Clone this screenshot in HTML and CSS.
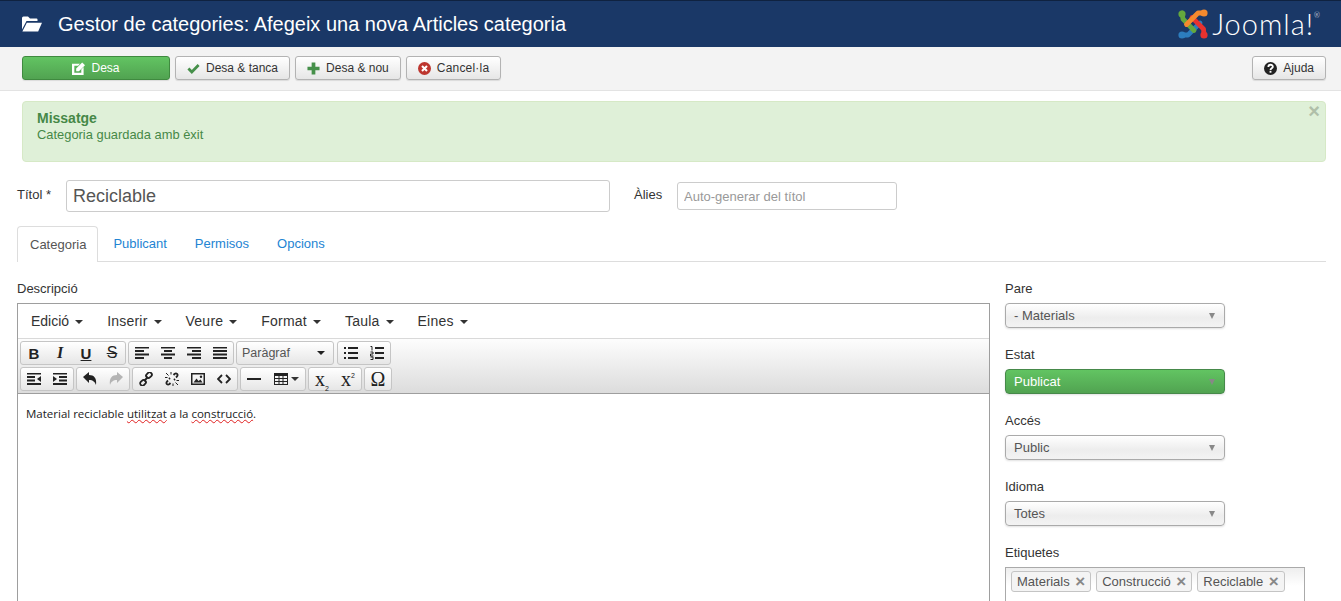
FILE: index.html
```html
<!DOCTYPE html>
<html lang="ca">
<head>
  <meta charset="UTF-8">
  <title>Gestor de categories</title>
  <link rel="stylesheet" href="styles.css">
</head>
<body>

  <header class="topbar">
    <svg class="topbar-icon" viewBox="0 0 20 16"><path fill="#fff" d="M0 2a1.500 1.500 0 0 1 1.500-1.500h4.500l2 2h6.500a1 1 0 0 1 1 1v1.500h-11l-4.500 8.500z"/><path fill="#fff" d="M4.800 6.800h15.200l-3.800 8.700h-15.800z"/></svg>
    <h1>Gestor de categories: Afegeix una nova Articles categoria</h1>
    <div class="logo">
      <svg class="logo-mark" viewBox="0 0 30 30" fill="none" stroke-width="4.800" stroke-linecap="round" stroke-linejoin="round">
        <path stroke="#2c7dbe" d="M4 26 L10 26 L22 14"/>
        <path stroke="#64a83d" d="M4 4 L5 10 L16 21.500"/>
        <path stroke="#e8322f" d="M26 26 L25.500 20 L14 8.500"/>
        <path stroke="#f48a2e" d="M26 4 L20 4 L8.500 15.500"/>
        <circle cx="4" cy="5" r="3.600" fill="#64a83d"/>
        <circle cx="26" cy="4" r="3.600" fill="#f48a2e"/>
        <circle cx="26" cy="26" r="3.600" fill="#e8322f"/>
        <circle cx="4" cy="26" r="3.600" fill="#2c7dbe"/>
      </svg>
      <span class="logo-text">Joomla!<sup>®</sup></span>
    </div>
  </header>

  <div class="toolbar">
    <button class="btn btn-save">
      <svg class="ico" viewBox="0 0 14 14"><path fill="#fff" d="M0 2h8.500l-2 2h-4v7.500h7.500v-3.500l2.500-2.500v8.500h-12.500z"/><path fill="#fff" d="M4.500 7l6.500-6.500 3 3-6.500 6.500h-3z"/></svg>
      Desa
    </button>
    <button class="btn">
      <svg class="ico" viewBox="0 0 14 14"><path fill="none" stroke="#46904a" stroke-width="3" d="M1.500 7l3.700 3.700 7.300-7.500"/></svg>
      Desa &amp; tanca
    </button>
    <button class="btn">
      <svg class="ico" viewBox="0 0 14 14"><path fill="none" stroke="#46904a" stroke-width="4" d="M7 .5v13M.5 7h13"/></svg>
      Desa &amp; nou
    </button>
    <button class="btn btn-cancel">
      <svg class="ico" viewBox="0 0 14 14"><circle cx="7" cy="7" r="7" fill="#bd362f"/><path stroke="#fff" stroke-width="2.200" d="M4.300 4.300l5.400 5.400M9.700 4.300l-5.400 5.400"/></svg>
      Cancel·la
    </button>
    <button class="btn btn-help">
      <svg class="ico" viewBox="0 0 14 14"><circle cx="7" cy="7" r="7" fill="#222"/><path fill="none" stroke="#fff" stroke-width="2" d="M4.700 5.300c0-3 4.800-3 4.800-.3 0 1.800-2.500 1.500-2.500 3.500"/><rect x="6" y="9.500" width="2" height="2" fill="#fff"/></svg>
      Ajuda
    </button>
  </div>

  <div class="alert">
    <span class="alert-close">×</span>
    <h4>Missatge</h4>
    <p>Categoria guardada amb èxit</p>
  </div>

  <div class="title-row">
    <label class="title-label">Títol *</label>
    <input class="title-input" type="text" value="Reciclable">
    <label class="alias-label">Àlies</label>
    <input class="alias-input" type="text" placeholder="Auto-generar del títol">
  </div>

  <ul class="tabs">
    <li class="active">Categoria</li>
    <li>Publicant</li>
    <li>Permisos</li>
    <li>Opcions</li>
  </ul>

  <div class="columns">
    <div class="main-col">
      <label class="field-label">Descripció</label>
      <div class="editor">
        <div class="menubar">
          <span class="menu-item">Edició<i class="caret"></i></span>
          <span class="menu-item">Inserir<i class="caret"></i></span>
          <span class="menu-item">Veure<i class="caret"></i></span>
          <span class="menu-item">Format<i class="caret"></i></span>
          <span class="menu-item">Taula<i class="caret"></i></span>
          <span class="menu-item">Eines<i class="caret"></i></span>
        </div>
        <div class="edit-tools">
          <div class="tool-row">
            <div class="group">
              <span class="tool tool-b">B</span>
              <span class="tool tool-i">I</span>
              <span class="tool tool-u">U</span>
              <span class="tool tool-s">S</span>
            </div>
            <div class="group">
              <span class="tool"><svg viewBox="0 0 14 12"><path d="M0 .5h14M0 4h9M0 7.500h14M0 11h9" stroke="#222" stroke-width="1.800"/></svg></span>
              <span class="tool"><svg viewBox="0 0 14 12"><path d="M0 .5h14M3 4h8M0 7.500h14M3 11h8" stroke="#222" stroke-width="1.800"/></svg></span>
              <span class="tool"><svg viewBox="0 0 14 12"><path d="M0 .5h14M5 4h9M0 7.500h14M5 11h9" stroke="#222" stroke-width="1.800"/></svg></span>
              <span class="tool"><svg viewBox="0 0 14 12"><path d="M0 .5h14M0 4h14M0 7.500h14M0 11h14" stroke="#222" stroke-width="1.800"/></svg></span>
            </div>
            <div class="group format-select">Paràgraf<i class="caret"></i></div>
            <div class="group">
              <span class="tool"><svg viewBox="0 0 14 12"><path d="M4 1h10M4 6h10M4 11h10" stroke="#222" stroke-width="1.800"/><path d="M0 0h2v2h-2zM0 5h2v2h-2zM0 10h2v2h-2z" fill="#222"/></svg></span>
              <span class="tool"><svg viewBox="0 0 14 14"><path d="M5 2h9M5 7h9M5 12h9" stroke="#222" stroke-width="1.800"/><path d="M.5 .5h1.500v4M.5 6h2.500v2h-2.500v2h3M.5 11h2.500v2.500h-2.500" fill="none" stroke="#222"/></svg></span>
            </div>
          </div>
          <div class="tool-row">
            <div class="group">
              <span class="tool"><svg viewBox="0 0 14 12"><path d="M0 .5h14M0 4h8M0 7.500h8M0 11h14" stroke="#222" stroke-width="1.800"/><path d="M14 3v6l-4-3z" fill="#222"/></svg></span>
              <span class="tool"><svg viewBox="0 0 14 12"><path d="M0 .5h14M6 4h8M6 7.500h8M0 11h14" stroke="#222" stroke-width="1.800"/><path d="M0 3v6l4-3z" fill="#222"/></svg></span>
            </div>
            <div class="group">
              <span class="tool"><svg viewBox="0 0 14 14"><path d="M0 5l6-5v3c5 0 8 3 7 10-1-3-3-5-7-5v3z" fill="#222"/></svg></span>
              <span class="tool"><svg viewBox="0 0 14 14"><path d="M14 5l-6-5v3c-5 0-8 3-7 10 1-3 3-5 7-5v3z" fill="#b4b4b4"/></svg></span>
            </div>
            <div class="group">
              <span class="tool"><svg viewBox="0 0 14 14"><g fill="none" stroke="#222" stroke-width="1.800"><rect x="7" y=".9" width="6" height="4.500" rx="2" transform="rotate(-45 10 3.200)"/><rect x="1" y="8.600" width="6" height="4.500" rx="2" transform="rotate(-45 4 10.800)"/></g><path d="M5 9l4-4" stroke="#222" stroke-width="1.800"/></svg></span>
              <span class="tool"><svg viewBox="0 0 14 14"><g fill="none" stroke="#222" stroke-width="1.800"><path d="M8.500 3l1-1c2-1.500 4 .5 2.500 2.500l-1 1M5.500 11l-1 1c-2 1.500-4-.5-2.500-2.500l1-1M5 6l-1 1M9 8l1-1"/></g><path d="M1 1l2.500 2.500M6 0v2.500M0 5.500h2.500M13 13l-2.500-2.500M8 14v-2.500M14 8.500h-2.500" stroke="#222"/></svg></span>
              <span class="tool"><svg viewBox="0 0 14 12"><path d="M0 0h14v12h-14zM1.500 1.500v9h11v-9z" fill="#222" fill-rule="evenodd"/><path d="M2.500 9.500l3-4 2 2.500 2-1.500 2 3z" fill="#222"/><circle cx="10" cy="3.700" r="1.200" fill="#222"/></svg></span>
              <span class="tool"><svg viewBox="0 0 14 10"><path d="M5 1l-4 4 4 4M9 1l4 4-4 4" fill="none" stroke="#222" stroke-width="1.800"/></svg></span>
            </div>
            <div class="group">
              <span class="tool"><svg viewBox="0 0 14 4"><rect y="1" width="14" height="2" fill="#222"/></svg></span>
              <span class="tool tool-wide"><svg viewBox="0 0 14 12"><path d="M0 0h14v12h-14zM1 3v2h3.500v-2zM5.500 3v2h3v-2zM9.500 3v2h3.500v-2zM1 6v2h3.500v-2zM5.500 6v2h3v-2zM9.500 6v2h3.500v-2zM1 9v2h3.500v-2zM5.500 9v2h3v-2zM9.500 9v2h3.500v-2z" fill="#222" fill-rule="evenodd"/></svg><i class="caret"></i></span>
            </div>
            <div class="group">
              <span class="tool tool-script"><span>x<sub>2</sub></span></span>
              <span class="tool tool-script"><span>x<sup>2</sup></span></span>
            </div>
            <div class="group">
              <span class="tool tool-omega">Ω</span>
            </div>
          </div>
        </div>
        <div class="edit-area">
          Material reciclable <span class="typo">utilitzat</span> a la <span class="typo">construcció</span>.
        </div>
      </div>
    </div>

    <aside class="side-col">
      <label class="field-label">Pare</label>
      <div class="select">- Materials<i class="select-arrow"></i></div>
      <label class="field-label">Estat</label>
      <div class="select select-green">Publicat<i class="select-arrow"></i></div>
      <label class="field-label">Accés</label>
      <div class="select">Public<i class="select-arrow"></i></div>
      <label class="field-label">Idioma</label>
      <div class="select">Totes<i class="select-arrow"></i></div>
      <label class="field-label">Etiquetes</label>
      <div class="tag-box">
        <span class="tag">Materials<b>×</b></span>
        <span class="tag">Construcció<b>×</b></span>
        <span class="tag">Reciclable<b>×</b></span>
      </div>
    </aside>
  </div>

</body>
</html>
```

FILE: styles.css
```css
html, body {
  height: 100%;
  overflow: hidden;
}
body {
  margin: 0;
  font-family: "Liberation Sans", Arial, sans-serif;
  font-size: 13px;
  color: #333;
  background: #fff;
}

/* top bar */
.topbar {
  display: flex;
  align-items: center;
  height: 46px;
  padding: 0 21px 0 22px;
  background: #1a3867;
  border-top: 1px solid #0f2240;
  color: #fff;
}
.topbar-icon {
  width: 20px;
  height: 16px;
  margin-right: 16px;
}
.topbar h1 {
  margin: 0;
  font-size: 20px;
  font-weight: normal;
  flex: 1;
}
.logo {
  display: flex;
  align-items: center;
}
.logo-mark {
  width: 30px;
  height: 30px;
  margin-right: 4px;
}
.logo-text {
  font-family: Lato, "Open Sans", sans-serif;
  font-weight: 300;
  font-size: 29px;
  letter-spacing: 1px;
  line-height: 30px;
  color: #fff;
}
.logo-text sup {
  font-size: 7px;
  letter-spacing: 0;
  vertical-align: 17px;
  line-height: 0;
}

/* action buttons */
.toolbar {
  display: flex;
  gap: 5px;
  height: 34px;
  padding: 9px 15px 0 22px;
  background: #f3f3f3;
  border-bottom: 1px solid #e3e3e3;
}
.btn {
  display: flex;
  align-items: center;
  justify-content: center;
  gap: 6px;
  height: 24px;
  padding: 0 11px;
  font: 12px "Liberation Sans", Arial, sans-serif;
  color: #333;
  background: linear-gradient(#fff, #e6e6e6);
  border: 1px solid #b3b3b3;
  border-radius: 3px;
  box-shadow: 0 1px 1px rgba(0, 0, 0, 0.1);
}
.ico {
  width: 13px;
  height: 13px;
}
.btn-save {
  width: 148px;
  color: #fff;
  background: linear-gradient(#62c462, #51a351);
  border-color: #3f8a3f;
}
.btn-cancel {
  letter-spacing: 0.200px;
}
.btn-help {
  margin-left: auto;
}

/* message */
.alert {
  position: relative;
  height: 59px;
  margin: 10px 15px 0 22px;
  padding: 0 14px;
  background: #dff0d8;
  border: 1px solid #d6e9c6;
  border-radius: 4px;
  color: #468847;
}
.alert h4 {
  margin: 8px 0 0;
  font-size: 14px;
  line-height: 16px;
}
.alert p {
  margin: 0;
  font-size: 12.900px;
  line-height: 17px;
}
.alert-close {
  position: absolute;
  top: 0;
  right: 5px;
  font-size: 20px;
  line-height: 19px;
  font-weight: bold;
  color: #b0bfa9;
}

/* title row */
.title-row {
  display: flex;
  align-items: flex-start;
  margin-top: 18px;
  padding-left: 17px;
}
.title-label {
  width: 49px;
  margin-top: 7px;
  line-height: 16px;
  color: #333;
}
.title-input {
  box-sizing: border-box;
  width: 544px;
  height: 32px;
  padding: 0 6px;
  font: 18px "Liberation Sans", Arial, sans-serif;
  color: #555;
  border: 1px solid #ccc;
  border-radius: 3px;
}
.alias-label {
  width: 43px;
  margin: 7px 0 0 24px;
  line-height: 16px;
}
.alias-input {
  box-sizing: border-box;
  width: 220px;
  height: 28px;
  margin-top: 2px;
  padding: 0 6px;
  font: 13px "Liberation Sans", Arial, sans-serif;
  border: 1px solid #ccc;
  border-radius: 3px;
}
.alias-input::placeholder {
  color: #999;
}

/* tabs */
.tabs {
  display: flex;
  height: 35px;
  margin: 14px 15px 0 17px;
  padding: 0;
  list-style: none;
  border-bottom: 1px solid #ddd;
}
.tabs li {
  padding: 0 14px;
  line-height: 35px;
  color: #2384d3;
}
.tabs .active {
  height: 35px;
  margin-right: 1px;
  padding: 0 11px 0 12px;
  color: #555;
  background: #fff;
  border: 1px solid #ddd;
  border-bottom: 0;
  border-radius: 4px 4px 0 0;
}

/* columns */
.columns {
  display: flex;
  margin-top: 18px;
  padding-left: 17px;
}
.main-col {
  width: 973px;
}
.side-col {
  width: 300px;
  margin-left: 15px;
}
.field-label {
  display: block;
  height: 16px;
  margin-bottom: 7px;
  line-height: 18px;
}

/* editor */
.editor {
  height: 400px;
  border: 1px solid #9e9e9e;
  box-sizing: border-box;
}
.menubar {
  display: flex;
  height: 34px;
  padding-left: 1px;
  align-items: center;
  border-bottom: 1px solid #d9d9d9;
  font-size: 14px;
  letter-spacing: 0.220px;
  color: #333;
}
.menu-item {
  padding: 0 12px;
}
.menu-item:first-child {
  letter-spacing: 0;
}
.caret {
  display: inline-block;
  margin-left: 6px;
  vertical-align: middle;
  border-top: 4px solid #333;
  border-left: 4px solid transparent;
  border-right: 4px solid transparent;
}
.edit-tools {
  height: 55px;
  padding: 2px 0 0 2px;
  box-sizing: border-box;
  background: linear-gradient(#fdfdfd, #dcdcdc);
  border-bottom: 1px solid #9e9e9e;
}
.tool-row {
  display: flex;
  gap: 2px;
  margin-bottom: 2px;
}
.group {
  display: flex;
  height: 24px;
  box-sizing: border-box;
  background: linear-gradient(#fff, #e6e6e6);
  border: 1px solid #c5c5c5;
  border-radius: 3px;
}
.tool {
  display: flex;
  align-items: center;
  justify-content: center;
  width: 26px;
  color: #222;
}
.tool svg {
  width: 14px;
}
.tool-wide {
  width: 38px;
}
.tool-wide .caret {
  margin-left: 3px;
}
.tool-b, .tool-u {
  font-size: 15px;
  font-weight: bold;
}
.tool-i {
  font: italic bold 16px "Liberation Serif", serif;
}
.tool-u {
  text-decoration: underline;
}
.tool-s {
  font-size: 16px;
  text-decoration: line-through;
}
.format-select {
  justify-content: space-between;
  align-items: center;
  width: 98px;
  padding: 0 8px 0 5px;
  font-size: 12.500px;
  color: #555;
  margin-right: 1px;
}
.format-select .caret {
  border-top-color: #222;
}
.tool-script {
  font-size: 20px;
  line-height: 20px;
  font-family: "Liberation Serif", serif;
}
.tool-script sub, .tool-script sup {
  font-size: 7px;
  line-height: 0;
  font-family: "Liberation Sans", sans-serif;
}
.tool-omega {
  font-family: "Liberation Serif", serif;
  font-size: 20px;
}
.edit-area {
  padding: 12px 8px;
  font-family: "Open Sans", sans-serif;
  font-size: 11.500px;
  line-height: 16px;
  color: #222;
}
.typo {
  text-decoration: underline wavy #e02020 1px;
}

/* side fields */
.select {
  position: relative;
  box-sizing: border-box;
  width: 220px;
  height: 25px;
  margin-bottom: 18px;
  padding-left: 8px;
  line-height: 24px;
  font-size: 13px;
  color: #555;
  background: linear-gradient(#fff, #ededed 60%, #f3f3f3);
  border: 1px solid #aaa;
  border-radius: 4px;
  box-shadow: 0 1px 2px rgba(0, 0, 0, 0.12);
}
.select-arrow {
  position: absolute;
  top: 9px;
  right: 9px;
  border-top: 6px solid #888;
  border-left: 3.500px solid transparent;
  border-right: 3.500px solid transparent;
}
.select-green {
  color: #fff;
  background: linear-gradient(#62c462, #51a351);
  border-color: #46894a;
}
.tag-box {
  width: 300px;
  height: 60px;
  box-sizing: border-box;
  padding: 3px 5px;
  display: flex;
  align-items: flex-start;
  gap: 5px;
  background: linear-gradient(#eee, #fff 18px);
  border: 1px solid #aaa;
}
.tag {
  height: 21px;
  box-sizing: border-box;
  padding: 0 5px;
  line-height: 19px;
  font-size: 13px;
  color: #555;
  background: #f4f4f4;
  border: 1px solid #c4c4c4;
  border-radius: 3px;
}
.tag b {
  margin-left: 5.500px;
  font-size: 17px;
  line-height: 0;
  vertical-align: -1px;
  color: #888;
}
```
